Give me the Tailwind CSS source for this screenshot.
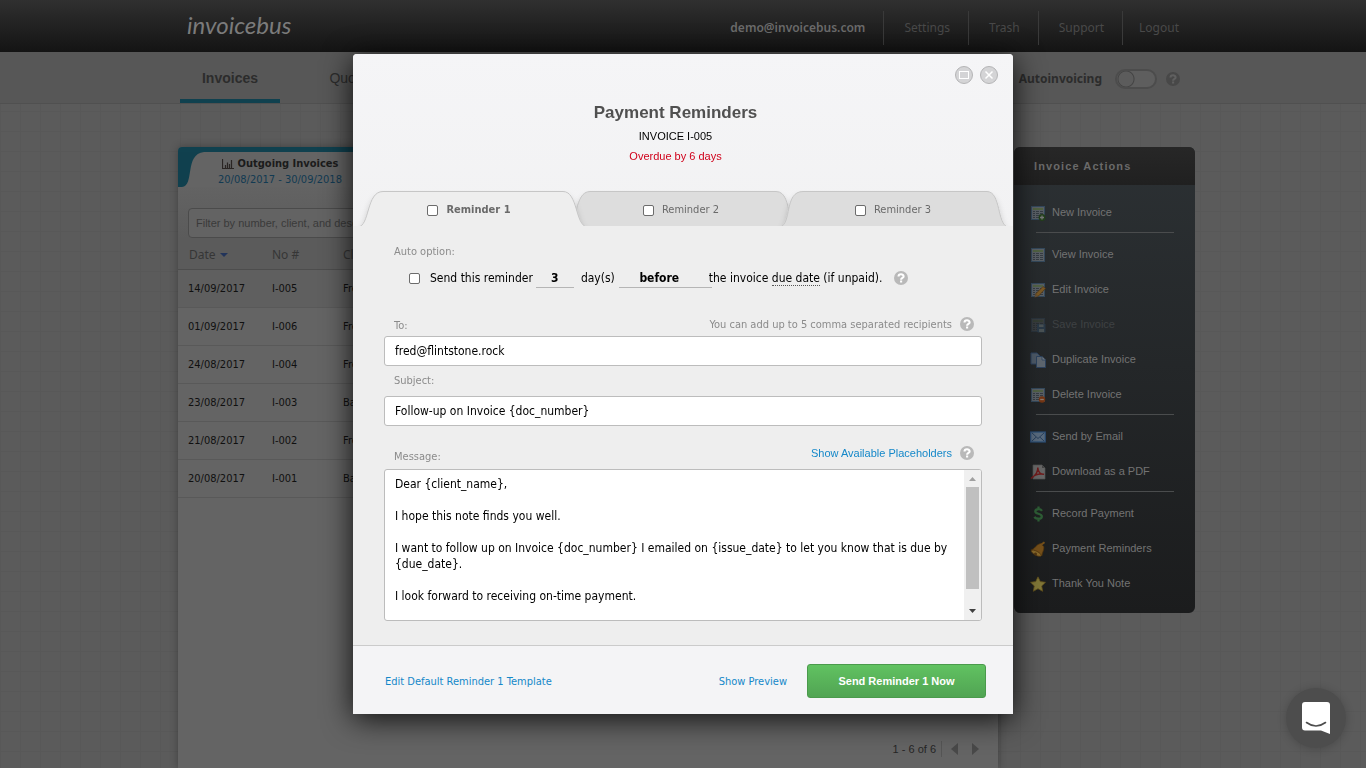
<!DOCTYPE html>
<html lang="en">
<head>
<meta charset="utf-8">
<meta name="viewport" content="width=device-width, initial-scale=1">
<title>Payment Reminders - Invoicebus</title>
<script src="https://cdn.jsdelivr.net/npm/@tailwindcss/browser@4"></script>
</head>
<body class="h-screen overflow-hidden bg-[#5b5b5b] font-['DejaVu_Sans_Condensed','DejaVu_Sans',sans-serif] text-[11px] text-black">
<svg class="hidden" aria-hidden="true">
  <symbol id="help" viewBox="0 0 14 14"><circle cx="7" cy="7" r="7" fill="currentColor"/><path d="M4.5 5.6C4.5 2.600 9.600 2.600 9.600 5.400C9.600 7 7.100 6.900 7.100 8.700M7.100 9.600V11.600" fill="none" stroke="var(--mark)" stroke-width="2.100"/></symbol>
  <symbol id="sheet" viewBox="0 0 16 16"><rect x="1.5" y="1.5" width="13" height="13" fill="#5a6066" stroke="#34495c"/><path d="M3 4H13" stroke="#4f6339" stroke-width="1.4"/><path d="M3 6.5H13M3 8.5H13M3 10.5H13M3 12.5H13" stroke="#363d44"/><path d="M5.5 6V13M9.5 6V13" stroke="#5a6066"/></symbol>
</svg>

<div class="flex h-full flex-col">
  <header class="shrink-0 bg-linear-to-b from-[#303030] to-[#141414]">
    <div class="mx-auto flex h-[52px] max-w-[1024px] items-center justify-between pl-4 font-['Noto_Sans',sans-serif] text-[12px] text-[#494949]">
      <a href="#" class="pb-0.5 font-['Lato','Noto_Sans',sans-serif] text-[24px] leading-7 text-[#7b7b7b] italic">invoicebus</a>
      <nav class="flex items-center pt-1">
        <a href="#" class="pr-[18px] font-semibold text-[#6b6b6b]">demo@invoicebus.com</a>
        <a href="#" class="border-l border-[#3a3a3a] py-2 pr-[18px] pl-5">Settings</a>
        <a href="#" class="border-l border-[#3a3a3a] py-2 pr-[18px] pl-5">Trash</a>
        <a href="#" class="border-l border-[#3a3a3a] py-2 pr-[18px] pl-5">Support</a>
        <a href="#" class="border-l border-[#3a3a3a] py-2 pr-4 pl-4">Logout</a>
      </nav>
    </div>
  </header>
  <div class="shrink-0 border-b border-[#505050] bg-[#575757]">
    <div class="mx-auto flex h-[51px] max-w-[1024px] items-stretch justify-between pr-[15px] pl-[9px] font-['Liberation_Sans',sans-serif] text-[14px] text-[#2c2c2c]">
      <nav class="flex">
        <a href="#" class="flex w-[100px] items-center justify-center border-b-4 border-[#10414f] pt-1.5 font-bold">Invoices</a>
        <a href="#" class="flex w-[144px] items-center justify-center pt-0.5">Quotes</a>
      </nav>
      <div class="flex items-center pt-0.5 font-['Noto_Sans',sans-serif] text-[12px] font-bold">
        <label for="auto" class="pr-[13px]">Autoinvoicing</label>
        <input id="auto" type="checkbox" class="h-5 w-[42px] appearance-none rounded-full border-2 border-[#4c4c4c] bg-[radial-gradient(circle_at_9px_8px,#5c5c5c_7px,#434343_8px,transparent_9px)] bg-[#5e5e5e]">
        <svg class="ml-[9px] h-[14px] w-[14px] text-[#484848] [--mark:#606060]"><use href="#help"/></svg>
      </div>
    </div>
  </div>

  <main class="min-h-0 flex-1 bg-[linear-gradient(to_right,#585858_1px,transparent_1px),linear-gradient(to_bottom,#585858_1px,transparent_1px)] bg-[size:20px_20px] bg-[position:0_7px]">
    <div class="mx-auto flex h-full max-w-[1024px] items-start gap-4 pt-[43px] pl-[7px]">
      <section class="flex h-full min-w-0 flex-1 flex-col rounded-t bg-[#646464] shadow-[0_0_8px_rgba(0,0,0,.3)]">
        <div class="flex h-10 rounded-t border-t-[5px] border-[#10414f]">
          <svg class="h-[35px] w-[30px] shrink-0" viewBox="0 0 30 35"><path d="M0 0H26C6 2 17 34 4 35H0Z" fill="#10404e"/></svg>
          <div class="flex w-[144px] flex-col items-center pt-1 leading-4">
            <div class="flex items-center gap-1 font-bold text-[#1b1b1b]">
              <svg class="h-[10px] w-3" viewBox="0 0 12 10"><path d="M.5 0V9.5H12M3.5 9V6M5.5 9V3.5M7.5 9V5M9.5 9V1" fill="none" stroke="#2a2523" stroke-width="1.2"/></svg>
              Outgoing Invoices</div>
            <a href="#" class="whitespace-nowrap text-[#123a52]">20/08/2017 - 30/09/2018</a>
          </div>
        </div>
        <div class="flex flex-col bg-linear-to-b from-[#636363] to-[#5b5b5b] pt-[21px]">
          <input type="text" aria-label="Filter" placeholder="Filter by number, client, and description" class="mx-[10px] h-[30px] w-[400px] rounded-sm border border-[#4b4b4b] bg-[#636363] px-[7px] font-['Liberation_Sans',sans-serif] text-[11px] placeholder:text-[#3a3a3a]">
        </div>
        <table class="w-full table-fixed text-left">
          <thead>
            <tr class="h-[31px] border-b border-[#4d4d4d] bg-[#5b5b5b] font-['Noto_Sans',sans-serif] text-[12px] text-[#363636] [&>th]:pt-1 [&>th]:font-normal">
              <th class="w-[94px] pl-[11px]"><span class="flex items-center gap-1">Date <svg class="h-1 w-2" viewBox="0 0 8 4"><path d="M0 0H8L4 4Z" fill="#22345a"/></svg></span></th>
              <th class="w-[71px]">No #</th><th>Client</th>
            </tr>
          </thead>
          <tbody class="text-[#101010] [&_td]:pt-0.5 [&_td:first-child]:pl-[10px] [&>tr]:h-[38px] [&>tr]:border-b [&>tr]:border-[#595959]">
            <tr class="bg-[#5f5f5f]"><td>14/09/2017</td><td>I-005</td><td>Fred</td></tr>
            <tr><td>01/09/2017</td><td>I-006</td><td>Fred</td></tr>
            <tr><td>24/08/2017</td><td>I-004</td><td>Fred</td></tr>
            <tr><td>23/08/2017</td><td>I-003</td><td>Barney</td></tr>
            <tr><td>21/08/2017</td><td>I-002</td><td>Fred</td></tr>
            <tr><td>20/08/2017</td><td>I-001</td><td>Barney</td></tr>
          </tbody>
        </table>
        <div class="mt-auto flex items-center justify-end pr-[19px] pb-[11px] font-['Liberation_Sans',sans-serif] text-[#262626]">
          <span class="border-r border-[#555] pr-[5px]">1 - 6 of 6</span>
          <button type="button" aria-label="Previous" class="ml-[9px]"><svg class="h-3 w-[7px]" viewBox="0 0 7 12"><path d="M7 0V12L0 6Z" fill="#494949"/></svg></button>
          <button type="button" aria-label="Next" class="ml-[14px]"><svg class="h-3 w-[7px]" viewBox="0 0 7 12"><path d="M0 0V12L7 6Z" fill="#494949"/></svg></button>
        </div>
      </section>

      <aside class="w-[181px] shrink-0 overflow-hidden rounded-md bg-linear-to-b from-[#2c3134] to-[#1b1c1d] font-['Liberation_Sans',sans-serif] text-[#737373]">
        <h2 class="flex h-[38px] items-center bg-linear-to-b from-[#272727] to-[#202020] pl-5 font-bold tracking-widest text-[#6a6a6a]">Invoice Actions</h2>
        <nav class="flex flex-col pt-[10px] pb-3 [&_svg]:h-4 [&_svg]:w-4 [&>a]:flex [&>a]:h-[35px] [&>a]:items-center [&>a]:gap-[6px] [&>a]:pl-4 [&>hr]:mt-[2px] [&>hr]:mb-1 [&>hr]:mr-[21px] [&>hr]:ml-[22px] [&>hr]:border-[#4a4c4d]">
          <a href="#"><svg viewBox="0 0 16 16"><use href="#sheet"/><circle cx="12" cy="12.5" r="3.4" fill="#23401b"/><path d="M12 10.5V14.5M10 12.5H14" stroke="#777" stroke-width="1.3"/></svg>New Invoice</a>
          <hr>
          <a href="#"><svg viewBox="0 0 16 16"><use href="#sheet"/></svg>View Invoice</a>
          <a href="#"><svg viewBox="0 0 16 16"><use href="#sheet"/><path d="M5 15L6 11.5L13 4.5L15.5 6.5L8.5 14Z" fill="#7a5925" stroke="#513313" stroke-width=".7"/><path d="M4.5 15.5L5.7 12L8 14.3Z" fill="#66523a"/></svg>Edit Invoice</a>
          <a href="#" class="text-[#3e4143]"><svg viewBox="0 0 16 16"><use href="#sheet" opacity=".35"/><path d="M7 7H15.5V15.5H8L7 14.5Z" fill="#2a3946"/><path d="M9 7.5H13.5V10H9ZM9 12H14V15H9Z" fill="#4a5254"/></svg>Save Invoice</a>
          <a href="#"><svg viewBox="0 0 16 16"><path d="M1 1H7L10 4V12H1Z" fill="#4d5967" stroke="#2c425e"/><path d="M6.5 4.5H12L15.5 8V15.5H6.5Z" fill="#5d6670" stroke="#2c425e"/><path d="M12 4.5V8H15.5" fill="#717981" stroke="#2c425e" stroke-width=".8"/></svg>Duplicate Invoice</a>
          <a href="#"><svg viewBox="0 0 16 16"><use href="#sheet"/><circle cx="12" cy="12.5" r="3.2" fill="#743614"/><path d="M10.2 12.5H13.8" stroke="#8b7b70" stroke-width="1.3"/></svg>Delete Invoice</a>
          <hr>
          <a href="#"><svg viewBox="0 0 16 16"><rect x=".7" y="3" width="14.6" height="10" fill="#596b7e" stroke="#294b73" stroke-width="1.2"/><path d="M2 4L8 9.5L14 4M2 12L6 8.2M14 12L10 8.2" fill="none" stroke="#28405d"/></svg>Send by Email</a>
          <a href="#"><svg viewBox="0 0 16 16"><path d="M3 1H12L15 4V15H3Z" fill="#686868" stroke="#555" stroke-width=".7"/><path d="M12 1V4H15" fill="#444"/><path d="M1 14.5C5 12 8 7.5 7.8 3.5C8 8 10.5 10.6 14 10.3C9.5 9.6 4.5 10.5 1 14.5Z" fill="none" stroke="#701c1c" stroke-width="1.4"/></svg>Download as a PDF</a>
          <hr>
          <a href="#"><svg viewBox="0 0 16 16"><path d="M12 4.8C10.5 2.6 5.3 2.6 5.3 5.5C5.3 8.3 11.8 7.2 11.8 10.4C11.8 13.6 5.6 13.3 4.5 10.8M8.5 .5V3M8.5 12.6V15.5" fill="none" stroke="#2e5e36" stroke-width="2.3"/></svg>Record Payment</a>
          <a href="#"><svg viewBox="0 0 16 16"><path d="M.8 9C5 8.5 6 3 10.5 2.5L13.8 5.5C14.5 9 12 11.5 12 14.8Z" fill="#76501a" stroke="#50340f" stroke-width=".7"/><path d="M11 3.8L14.5 1.2" stroke="#76501a" stroke-width="2"/><ellipse cx="6.2" cy="12.2" rx="5.6" ry="2" transform="rotate(28 6.2 12.2)" fill="#8a6a2b" stroke="#50340f" stroke-width=".7"/><circle cx="5.5" cy="13" r="1.5" fill="#503512"/></svg>Payment Reminders</a>
          <a href="#"><svg viewBox="0 0 16 16"><path d="M8 .8L10.3 5.6L15.5 6.3L11.7 10L12.7 15.3L8 12.7L3.3 15.3L4.3 10L.5 6.3L5.7 5.6Z" fill="#827838" stroke="#62501c" stroke-width=".8"/></svg>Thank You Note</a>
        </nav>
      </aside>
    </div>
  </main>
</div>

<div class="fixed inset-0 flex items-center justify-center">
  <form role="dialog" aria-labelledby="title" class="flex w-[660px] flex-col rounded-t bg-[#eee] shadow-[0_5px_30px_rgba(0,0,0,.85)]">
    <div class="rounded-t bg-linear-to-b from-[#f5f5f7] to-[#f2f2f3]">
      <div class="flex justify-end gap-[7px] pt-3 pr-[15px]">
        <button type="button" aria-label="Maximize" class="h-[18px] w-[18px]"><svg viewBox="0 0 18 18"><circle cx="9" cy="9" r="8.5" fill="#d4d4d6" stroke="#b4b4b6"/><rect x="4.5" y="5.5" width="9" height="7" fill="none" stroke="#fff"/></svg></button>
        <button type="button" aria-label="Close" class="h-[18px] w-[18px]"><svg viewBox="0 0 18 18"><circle cx="9" cy="9" r="8.5" fill="#d4d4d6" stroke="#b4b4b6"/><path d="M5.5 5.5L12.5 12.5M12.5 5.5L5.5 12.5" stroke="#fff" stroke-width="1.5"/></svg></button>
      </div>
      <div class="flex flex-col items-center pt-[19px] pr-[15px] font-['Liberation_Sans',sans-serif] leading-5">
        <h1 id="title" class="text-[17px] font-bold text-[#505050]">Payment Reminders</h1>
        <p class="pt-[3px]">INVOICE I-005</p>
        <p class="text-[#d0021b]">Overdue by 6 days</p>
      </div>
      <div class="relative mt-6 h-9">
        <svg class="absolute inset-0" width="660" height="36" viewBox="0 0 660 36">
          <defs>
            <filter id="soft" x="-10%" y="-40%" width="120%" height="180%"><feDropShadow dx="0" dy="5" stdDeviation="3" flood-color="#000" flood-opacity=".22"/></filter>
          </defs>
          <g stroke="#c6c6c6">
            <path filter="url(#soft)" d="M213 37C225 36 221 1.500 237 1.500H423C433 1.500 434 14 437 24C440 34 442 37 446 37Z" fill="#ddd"/>
            <path filter="url(#soft)" d="M427 37C439 34 431 1.500 450 1.500H634C648 1.500 644 35 655 37Z" fill="#ddd"/>
            <path filter="url(#soft)" d="M5 37C17 36 13 1.500 30 1.500H210C225 1.500 222 35 234 37Z" fill="#eee"/>
          </g>
        </svg>
        <div class="relative grid h-full grid-cols-3 items-center pt-1 pr-[14px] pl-[10px] text-[#6a6a6a] [&_input]:h-[11px] [&_input]:w-[11px] [&_input]:appearance-none [&_input]:rounded-[2px] [&_input]:border [&_input]:border-[#6c6c6c] [&_input]:bg-white [&>label]:flex [&>label]:items-center [&>label]:justify-center [&>label]:gap-2">
          <label class="font-bold"><input type="checkbox">Reminder 1</label>
          <label><input type="checkbox">Reminder 2</label>
          <label><input type="checkbox">Reminder 3</label>
        </div>
      </div>
    </div>

    <div class="flex flex-col px-[31px] pt-[18px] pb-6">
      <p class="pl-[10px] leading-4 text-[#8b8b8b]">Auto option:</p>
      <div class="mt-[5px] flex h-[22px] items-center pt-1 pl-[25px] text-[12px]">
        <label class="flex items-center gap-[10px]"><input type="checkbox" class="h-[11px] w-[11px] appearance-none rounded-[2px] border border-[#6c6c6c] bg-white">Send this reminder</label>
        <input type="text" value="3" aria-label="Days" class="ml-[3px] h-5 w-[38px] border-b border-[#b5b5b5] text-center font-bold">
        <span class="ml-[7px]">day(s)</span>
        <select aria-label="When" class="ml-1 h-5 w-[93px] appearance-none border-b border-[#b5b5b5] pr-3 text-center font-bold [text-align-last:center]"><option>before</option><option>after</option></select>
        <span class="-ml-[3px] whitespace-nowrap">the invoice <a href="#" class="border-b border-dotted border-[#555]">due date</a> (if unpaid).</span>
        <svg class="ml-3 h-[14px] w-[14px] shrink-0 text-[#b9b9b9] [--mark:#fff]"><use href="#help"/></svg>
      </div>
      <div class="mt-[26px] flex h-[22px] items-center pr-2 pl-[10px] text-[#8b8b8b]">
        <label for="to" class="pt-1">To:</label>
        <span class="ml-auto pt-0.5">You can add up to 5 comma separated recipients</span>
        <svg class="ml-2 h-[14px] w-[14px] text-[#b9b9b9] [--mark:#fff]"><use href="#help"/></svg>
      </div>
      <input id="to" type="text" value="fred@flintstone.rock" class="mt-px h-[30px] rounded-[3px] border border-[#bcbcbc] bg-white px-[10px] text-[12px]">
      <label for="subject" class="mt-[7px] pl-[10px] leading-4 text-[#8b8b8b]">Subject:</label>
      <input id="subject" type="text" value="Follow-up on Invoice {doc_number}" class="mt-[7px] h-[30px] rounded-[3px] border border-[#bcbcbc] bg-white px-[10px] text-[12px]">
      <div class="mt-4 flex h-[22px] items-center pr-2 pl-[10px]">
        <label for="message" class="pt-2 text-[#8b8b8b]">Message:</label>
        <a href="#" class="ml-auto font-['Liberation_Sans',sans-serif] text-[#1588c9]">Show Available Placeholders</a>
        <svg class="ml-2 h-[14px] w-[14px] text-[#b9b9b9] [--mark:#fff]"><use href="#help"/></svg>
      </div>
      <div class="mt-[5px] flex h-[152px] overflow-hidden rounded-[3px] border border-[#bcbcbc] bg-white">
        <textarea id="message" class="min-w-0 flex-1 resize-none overflow-hidden pt-[6px] pl-[10px] text-[12px] leading-4">Dear {client_name},

I hope this note finds you well.

I want to follow up on Invoice {doc_number} I emailed on {issue_date} to let you know that is due by {due_date}.

I look forward to receiving on-time payment.</textarea>
        <div class="flex w-[17px] flex-col items-center bg-[#f0f0f0]" aria-hidden="true">
          <svg class="h-[17px] w-[17px] shrink-0" viewBox="0 0 17 17"><path d="M5 11H12L8.500 7Z" fill="#a0a0a0"/></svg>
          <div class="h-[102px] w-[13px] shrink-0 bg-[#c0c0c0]"></div>
          <svg class="mt-auto h-[17px] w-[17px] shrink-0" viewBox="0 0 17 17"><path d="M5 6H12L8.500 10Z" fill="#404040"/></svg>
        </div>
      </div>
    </div>

    <footer class="flex items-center border-t border-[#cbcbcb] bg-[#f4f4f6] pt-[18px] pr-[27px] pb-4 pl-8 text-[#1588c9]">
      <a href="#" class="pt-0.5">Edit Default Reminder 1 Template</a>
      <a href="#" class="ml-auto pt-0.5">Show Preview</a>
      <button type="button" class="ml-5 h-[34px] w-[179px] rounded-[3px] border border-[#4a9a4c] bg-linear-to-b from-[#61c261] to-[#51a453] font-['Liberation_Sans',sans-serif] font-bold text-white">Send Reminder 1 Now</button>
    </footer>
  </form>
</div>

<button type="button" aria-label="Open chat" class="fixed right-5 bottom-5 flex h-[60px] w-[60px] items-center justify-center rounded-full bg-[#4d4d4d] shadow-[0_1px_10px_rgba(0,0,0,.2)]">
  <svg class="h-8 w-7" viewBox="0 0 28 32"><path d="M3 0H25Q28 0 28 3V32L19 28.500H3Q0 28.500 0 25.500V3Q0 0 3 0Z" fill="#fff"/><path d="M4.500 20.500Q14 27.500 23.500 20.500" fill="none" stroke="#4d4d4d" stroke-width="1.600" stroke-linecap="round"/></svg>
</button>
</body>
</html>
